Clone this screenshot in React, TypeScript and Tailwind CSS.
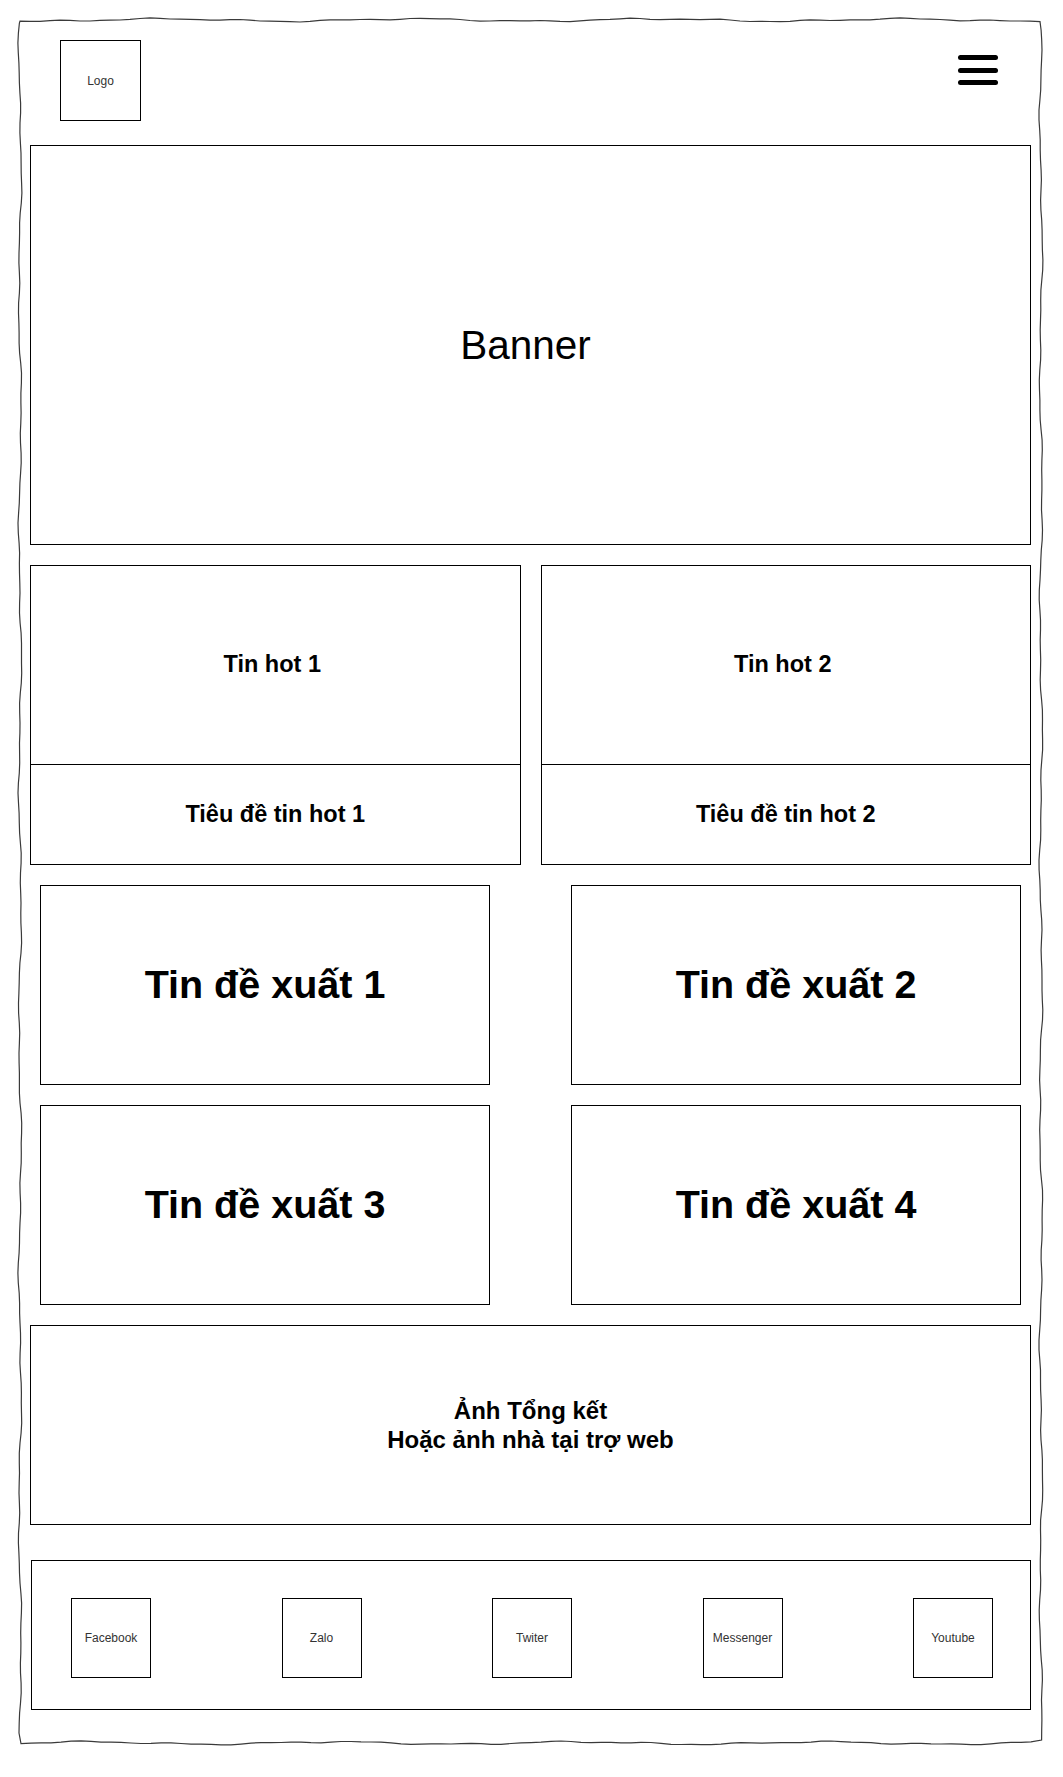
import React from "react";

const W = 1021;
const H = 1723;

function wavyPath(): string {
  const pts: [number, number][] = [];
  const step = 10;
  const off = (t: number, seed: number) =>
    1.2 * Math.sin(t / 39 + seed) + 0.6 * Math.sin(t / 15 + seed * 2.3) + 0.35 * Math.sin(t / 7 + seed * 5.1);
  for (let x = 0; x <= W; x += step) pts.push([x, off(x, 1)]);
  for (let y = step; y <= H; y += step) pts.push([W + off(y, 2), y]);
  for (let x = W - step; x >= 0; x -= step) pts.push([x, H + off(x, 3)]);
  for (let y = H - step; y > 0; y -= step) pts.push([off(y, 4), y]);
  return "M" + pts.map((p) => p[0].toFixed(1) + "," + p[1].toFixed(1)).join(" L") + " Z";
}

const font = { fontFamily: '"Liberation Sans", Arial, Helvetica, sans-serif' };

function SmallBox({ label }: { label: string }) {
  return (
    <div className="w-[80px] h-[80px] border border-black flex items-center justify-center text-[12px] text-[#333]">
      {label}
    </div>
  );
}

export default function App() {
  const d = wavyPath();
  return (
    <div className="w-[1063px] h-[1777px] bg-white pt-[20px] pl-[20px] text-black" style={font}>
      <div className="relative w-[1021px] h-[1723px] px-[10px] pt-[20px]">
        <svg
          className="absolute left-0 top-0 pointer-events-none overflow-visible"
          width={W}
          height={H}
          viewBox={`0 0 ${W} ${H}`}
        >
          <path d={d} fill="none" stroke="#3a3a3a" strokeWidth={1.2} />
        </svg>

        {/* Header */}
        <div className="flex justify-between items-start pl-[30px] pr-[33px]">
          <div className="w-[81px] h-[81px] border border-black flex items-center justify-center text-[12px] text-[#333]">
            Logo
          </div>
          <div className="mt-[15px] w-[40px] flex flex-col gap-[7.5px]">
            <div className="h-[5px] bg-black rounded-full" />
            <div className="h-[5px] bg-black rounded-full" />
            <div className="h-[5px] bg-black rounded-full" />
          </div>
        </div>

        {/* Banner */}
        <div className="mt-[24px] h-[400px] border border-black flex items-center justify-center pr-[10px] text-[40.5px]">
          Banner
        </div>

        {/* Hot news */}
        <div className="mt-[20px] grid grid-cols-2 gap-[20px]">
          {[1, 2].map((n) => (
            <div key={n} className="h-[300px] border border-black flex flex-col">
              <div className="flex-1 flex items-center justify-center pr-[6px] text-[23.5px] font-bold">Tin hot {n}</div>
              <div className="h-[100px] border-t border-black flex items-center justify-center text-[23.5px] font-bold">
                Tiêu đề tin hot {n}
              </div>
            </div>
          ))}
        </div>

        {/* Suggested news */}
        <div className="mt-[20px] px-[10px] grid grid-cols-2 gap-x-[81px] gap-y-[20px]">
          {[1, 2, 3, 4].map((n) => (
            <div key={n} className="h-[200px] border border-black flex items-center justify-center text-[39.5px] font-bold">
              Tin đề xuất {n}
            </div>
          ))}
        </div>

        {/* Summary */}
        <div className="mt-[20px] h-[200px] border border-black flex flex-col items-center justify-center text-center text-[24px] leading-[29px] font-bold">
          <div>Ảnh Tổng kết</div>
          <div>Hoặc ảnh nhà tại trợ web</div>
        </div>

        {/* Footer */}
        <div className="mt-[35px] ml-[1px] h-[150px] border border-black flex items-center justify-between pl-[39px] pr-[37px] pt-[6px]">
          <SmallBox label="Facebook" />
          <SmallBox label="Zalo" />
          <SmallBox label="Twiter" />
          <SmallBox label="Messenger" />
          <SmallBox label="Youtube" />
        </div>
      </div>
    </div>
  );
}
